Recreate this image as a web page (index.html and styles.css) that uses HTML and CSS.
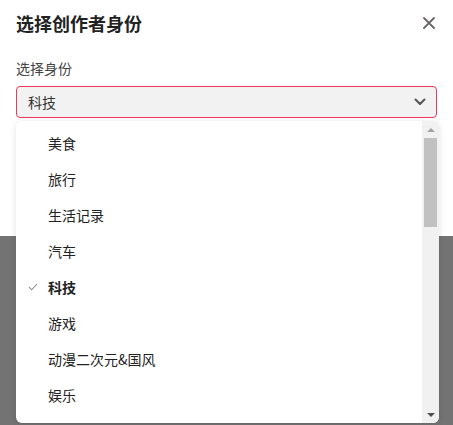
FILE: index.html
```html
<!DOCTYPE html>
<html lang="zh">
<head>
<meta charset="utf-8">
<link rel="stylesheet" href="styles.css">
</head>
<body>
<div class="page">
  <div class="dialog">
    <div class="header">
      <h1 class="title">选择创作者身份</h1>
      <svg class="close" width="12" height="12" viewBox="0 0 12 12"><path d="M1 1L11 11M11 1L1 11" stroke="#6a6668" stroke-width="1.8" stroke-linecap="round"/></svg>
    </div>
    <div class="field">
      <div class="label">选择身份</div>
      <div class="select">
        <span class="value">科技</span>
        <svg class="chev" width="12" height="8" viewBox="0 0 12 8"><path d="M1.5 1.5L6 6L10.5 1.5" fill="none" stroke="#555" stroke-width="2" stroke-linecap="round" stroke-linejoin="round"/></svg>
      </div>
    </div>
  </div>
  <div class="backdrop"></div>
  <div class="menu">
    <ul class="list">
      <li class="item">美食</li>
      <li class="item">旅行</li>
      <li class="item">生活记录</li>
      <li class="item">汽车</li>
      <li class="item selected"><svg class="check" width="10" height="8" viewBox="0 0 10 8"><path d="M1 4.2L3.7 6.8L9 1" fill="none" stroke="#888" stroke-width="1.1"/></svg>科技</li>
      <li class="item">游戏</li>
      <li class="item">动漫二次元&amp;国风</li>
      <li class="item">娱乐</li>
    </ul>
    <div class="scrollbar">
      <div class="arrow up"></div>
      <div class="track"><div class="thumb"></div></div>
      <div class="arrow down"></div>
    </div>
  </div>
</div>
</body>
</html>
```

FILE: styles.css
```css
* { box-sizing: border-box; }
html, body { margin: 0; padding: 0; }
body {
  font-family: "Noto Sans CJK SC", "Noto Sans", sans-serif;
  width: 453px;
  height: 425px;
  overflow: hidden;
}
.page {
  position: relative;
  display: flex;
  flex-direction: column;
  height: 425px;
}
.dialog {
  background: #fff;
  height: 236px;
  padding: 0 16px;
}
.header {
  display: flex;
  align-items: center;
  justify-content: space-between;
  height: 44px;
  padding-top: 1px;
}
.title {
  margin: 0;
  font-size: 18px;
  font-weight: 700;
  color: #222;
  line-height: 24px;
}
.close { margin-right: 2px; }
.field { padding-top: 14px; }
.label {
  font-size: 14px;
  color: #444;
  line-height: 20px;
  height: 20px;
}
.select {
  margin-top: 8px;
  height: 32px;
  border: 1px solid #f0365c;
  border-radius: 4px;
  background: #f2f2f2;
  display: flex;
  align-items: center;
  justify-content: space-between;
  padding: 0 10px 0 11px;
}
.value {
  font-size: 14px;
  color: #333;
}
.backdrop {
  flex: 1;
  background: #737373;
}
.menu {
  position: absolute;
  left: 16px;
  top: 121px;
  width: 423px;
  height: 302px;
  background: #fff;
  border-radius: 6px;
  box-shadow: 0 1px 6px rgba(0,0,0,0.12);
  display: flex;
  overflow: hidden;
}
.list {
  flex: 1;
  list-style: none;
  margin: 0;
  padding: 4px 0 0 0;
}
.item {
  position: relative;
  height: 36px;
  line-height: 36px;
  padding-left: 32px;
  font-size: 14px;
  color: #222;
}
.item.selected { font-weight: 700; }
.check {
  position: absolute;
  left: 12px;
  top: 14px;
}
.scrollbar {
  width: 17px;
  background: #f1f1f1;
  display: flex;
  flex-direction: column;
}
.arrow {
  height: 17px;
  display: flex;
  align-items: center;
  justify-content: center;
}
.arrow::before {
  content: "";
  width: 0;
  height: 0;
  border-left: 4px solid transparent;
  border-right: 4px solid transparent;
}
.arrow.up::before { border-bottom: 4px solid #a3a3a3; }
.arrow.down::before { border-top: 4px solid #505050; }
.track {
  flex: 1;
  padding: 0 2px;
}
.thumb {
  height: 89px;
  background: #c1c1c1;
}
```
